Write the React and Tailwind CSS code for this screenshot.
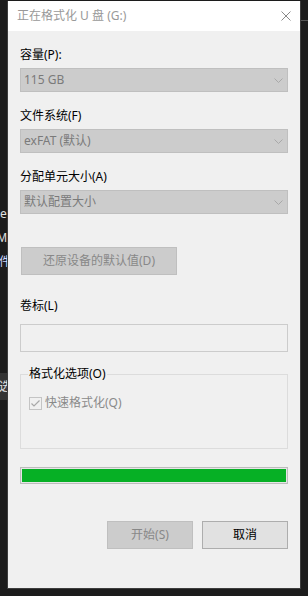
import { useState } from "react";

const font = "font-['Noto_Sans','Noto_Sans_CJK_SC',sans-serif]";

function Chevron() {
  return (
    <svg width="9" height="5" viewBox="0 0 9 5" className="shrink-0">
      <path d="M0.5 0.5 L4.5 4.5 L8.5 0.5" fill="none" stroke="#a8a8a8" strokeWidth="1" />
    </svg>
  );
}

function Select({ value }) {
  return (
    <div className="mt-[5px] h-[24px] w-[268px] flex items-center justify-between bg-[#cccccc] border border-[#bfbfbf] pl-[3px] pr-[4px]">
      <span className="text-[12px] leading-4 text-[#7a7a7a]">{value}</span>
      <Chevron />
    </div>
  );
}

function Label({ children, className = "" }) {
  return <div className={`h-4 text-[12px] leading-4 text-black ${className}`}>{children}</div>;
}

export default function App() {
  const [quick, setQuick] = useState(true);

  return (
    <div className={`w-[308px] h-[596px] bg-[#1c1c1c] flex overflow-hidden ${font}`}>
      {/* background window peeking out on the left */}
      <div className="w-[7px] shrink-0 overflow-hidden text-[12px] leading-4 text-[#e2e2e2] whitespace-nowrap">
        <div className="mt-[206px] h-4">e</div>
        <div className="mt-[8px] h-4 -ml-[3px] text-[12px] font-['Liberation_Sans',sans-serif]">Mc</div>
        <div className="mt-[8px] h-4 -ml-[1px] text-[#cfd8ff]">件</div>
        <div className="mt-[103px] h-[27px] bg-[#333333] flex items-center -ml-[1px]">选</div>
      </div>

      {/* dialog */}
      <div className="w-[294px] shrink-0 mt-[1px] h-[588px] bg-[#f0f0f0] border-x border-b border-[#3d3d3d] flex flex-col">
        <div className="h-[30px] bg-white flex items-center justify-between pl-[9px] pr-[9px]">
          <span className="text-[12px] leading-4 text-[#999999]">正在格式化 U 盘 (G:)</span>
          <svg width="10" height="10" viewBox="0 0 10 10">
            <path d="M0.5 0.5 L9.5 9.5 M9.5 0.5 L0.5 9.5" stroke="#8a8a8a" strokeWidth="1" />
          </svg>
        </div>

        <div className="flex-1 flex flex-col pl-[12px]">
          <Label className="mt-[16px]">容量(P):</Label>
          <Select value="115 GB" />

          <Label className="mt-[16px]">文件系统(F)</Label>
          <Select value="exFAT (默认)" />

          <Label className="mt-[16px]">分配单元大小(A)</Label>
          <Select value="默认配置大小" />

          <div className="mt-[33px] ml-[1px] h-[28px] w-[156px] bg-[#cccccc] border border-[#bfbfbf] flex items-center justify-center text-[12px] text-[#888888]">
            还原设备的默认值(D)
          </div>

          <Label className="mt-[23px]">卷标(L)</Label>
          <div className="mt-[10px] h-[28px] w-[268px] border border-[#cccccc] bg-[#f0f0f0]" />

          <fieldset className="mt-[14px] w-[268px] h-[83px] border border-[#dcdcdc]">
            <legend className="ml-[7px] px-[1px] text-[12px] leading-4 text-black">格式化选项(O)</legend>
            <label className="mt-[13px] ml-[8px] h-4 flex items-center gap-[3px]" onClick={() => setQuick(!quick)}>
              <svg width="13" height="13" viewBox="0 0 13 13" className="shrink-0">
                <rect x="0.5" y="0.5" width="12" height="12" fill="#f0f0f0" stroke="#c4c4c4" />
                {quick && (
                  <path d="M2.5 6.5 L5 9 L10.5 3.5" fill="none" stroke="#a8a8a8" strokeWidth="1.2" />
                )}
              </svg>
              <span className="text-[12px] leading-4 text-[#8a8a8a]">快速格式化(Q)</span>
            </label>
          </fieldset>

          <div className="mt-[18px] w-[268px] h-[17px] border border-[#bcbcbc] bg-[#e6e6e6] p-[1px]">
            <div className="h-full bg-[#06b025]" style={{ width: "100%" }} />
          </div>

          <div className="mt-[37px] w-[268px] flex justify-end gap-[9px]">
            <div className="w-[86px] h-[28px] bg-[#cccccc] border border-[#bfbfbf] flex items-center justify-center text-[12px] text-[#888888]">
              开始(S)
            </div>
            <button className="w-[86px] h-[28px] bg-[#e1e1e1] border border-[#adadad] flex items-center justify-center text-[12px] text-black">
              取消
            </button>
          </div>
        </div>
      </div>

      {/* background on the right */}
      <div className="flex-1 flex flex-col">
        <div className="mt-[20px] h-[1px] bg-[#555555]" />
      </div>
    </div>
  );
}
